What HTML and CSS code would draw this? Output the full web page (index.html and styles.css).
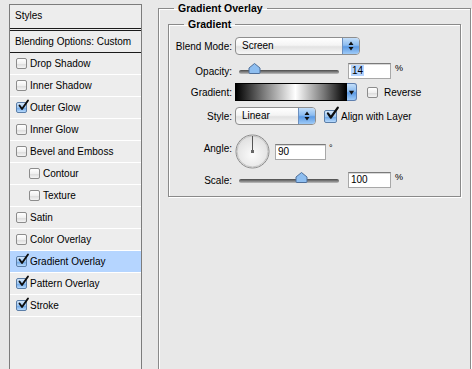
FILE: index.html
```html
<!DOCTYPE html>
<html lang="en">
<head>
    <meta charset="UTF-8">
    <title>Layer Style - Gradient Overlay</title>
    <link rel="stylesheet" href="styles.css">
</head>
<body>
    <div class="styles-panel">
        <div class="panel-head">Styles</div>
        <div class="panel-blend">Blending Options: Custom</div>
        <div class="fx"><span class="cb"></span>Drop Shadow</div>
        <div class="fx"><span class="cb"></span>Inner Shadow</div>
        <div class="fx"><span class="cb on"><svg viewBox="0 0 12 12"><path d="M2.5 5.5 L5 9 L11 0.5"/></svg></span>Outer Glow</div>
        <div class="fx"><span class="cb"></span>Inner Glow</div>
        <div class="fx"><span class="cb"></span>Bevel and Emboss</div>
        <div class="fx sub"><span class="cb"></span>Contour</div>
        <div class="fx sub"><span class="cb"></span>Texture</div>
        <div class="fx"><span class="cb"></span>Satin</div>
        <div class="fx"><span class="cb"></span>Color Overlay</div>
        <div class="fx selected"><span class="cb on"><svg viewBox="0 0 12 12"><path d="M2.5 5.5 L5 9 L11 0.5"/></svg></span>Gradient Overlay</div>
        <div class="fx"><span class="cb on"><svg viewBox="0 0 12 12"><path d="M2.5 5.5 L5 9 L11 0.5"/></svg></span>Pattern Overlay</div>
        <div class="fx"><span class="cb on"><svg viewBox="0 0 12 12"><path d="M2.5 5.5 L5 9 L11 0.5"/></svg></span>Stroke</div>
    </div>

    <div class="main">
        <fieldset class="group outer">
            <legend>Gradient Overlay</legend>
            <fieldset class="group inner">
                <legend>Gradient</legend>

                <div class="field r-blend">
                    <label>Blend Mode:</label>
                    <div class="popup blend-popup">
                        <span class="popup-text">Screen</span>
                        <span class="stepper"><svg viewBox="0 0 8 12"><path d="M4 1.5 L6.5 5 H1.5 Z M4 10.5 L6.5 7 H1.5 Z"/></svg></span>
                    </div>
                </div>

                <div class="field r-opacity">
                    <label>Opacity:</label>
                    <div class="slider">
                        <div class="track"></div>
                        <svg class="thumb" style="left: 9px" viewBox="0 0 13 11"><path d="M6.5 0.5 L12 5 V9.5 Q12 10.5 11 10.5 H2 Q1 10.5 1 9.5 V5 Z"/></svg>
                    </div>
                    <div class="num"><span class="sel">14</span></div>
                    <span class="unit">%</span>
                </div>

                <div class="field r-gradient">
                    <label>Gradient:</label>
                    <div class="grad-bar"></div>
                    <span class="grad-drop"><svg viewBox="0 0 8 8"><path d="M1 2 H7 L4 6.5 Z"/></svg></span>
                    <span class="cb reverse-cb"></span>
                    <span class="cb-label reverse-label">Reverse</span>
                </div>

                <div class="field r-style">
                    <label>Style:</label>
                    <div class="popup style-popup">
                        <span class="popup-text">Linear</span>
                        <span class="stepper"><svg viewBox="0 0 8 12"><path d="M4 1.5 L6.5 5 H1.5 Z M4 10.5 L6.5 7 H1.5 Z"/></svg></span>
                    </div>
                    <span class="cb on big-cb"><svg viewBox="0 0 12 12"><path d="M2.5 5.5 L5 9 L11 0.5"/></svg></span>
                    <span class="cb-label align-label">Align with Layer</span>
                </div>

                <div class="field r-angle">
                    <label>Angle:</label>
                    <svg class="dial" viewBox="0 0 35 35">
                        <defs>
                            <radialGradient id="dialFill" cx="50%" cy="60%" r="60%">
                                <stop offset="0" stop-color="#fbfbfb"/>
                                <stop offset="1" stop-color="#dedede"/>
                            </radialGradient>
                        </defs>
                        <circle cx="17.5" cy="17.5" r="16.5" fill="url(#dialFill)" stroke="#8c8c8c"/>
                        <circle cx="17.5" cy="17.5" r="15.5" fill="none" stroke="#c4c4c4"/>
                        <line x1="17.5" y1="17.5" x2="17.5" y2="2" stroke="#555" stroke-width="1"/>
                        <rect x="16" y="16" width="3" height="3" fill="#666"/>
                    </svg>
                    <div class="num angle-num">90</div>
                    <span class="unit deg">°</span>
                </div>

                <div class="field r-scale">
                    <label>Scale:</label>
                    <div class="slider">
                        <div class="track"></div>
                        <svg class="thumb" style="left: 56px" viewBox="0 0 13 11"><path d="M6.5 0.5 L12 5 V9.5 Q12 10.5 11 10.5 H2 Q1 10.5 1 9.5 V5 Z"/></svg>
                    </div>
                    <div class="num">100</div>
                    <span class="unit">%</span>
                </div>
            </fieldset>
        </fieldset>
    </div>
</body>
</html>
```

FILE: styles.css
```css
html, body {
    height: 100%;
}
body {
    margin: 0;
    display: flex;
    overflow: hidden;
    background: #e8e8e8;
    font-family: "Liberation Sans", Arial, sans-serif;
    font-size: 10px;
    color: #000;
}

/* left list of effects */
.styles-panel {
    flex: none;
    width: 131px;
    height: 420px;
    margin: 4px 0 0 9px;
    border: 1px solid #7c7c7c;
    background: #ededed;
}
.panel-head {
    height: 23px;
    line-height: 22px;
    padding-left: 5px;
    border-bottom: 3px double #1a1a1a;
}
.panel-blend {
    height: 21px;
    line-height: 21px;
    padding-left: 5px;
    border-bottom: 1px solid #1a1a1a;
}
.fx {
    display: flex;
    align-items: center;
    gap: 3px;
    height: 21px;
    padding-left: 6px;
    border-bottom: 1px solid #fff;
}
.fx.sub {
    padding-left: 19px;
}
.fx.selected {
    background: #b5d5ff;
}

/* aqua checkbox */
.cb {
    flex: none;
    position: relative;
    width: 11px;
    height: 11px;
    box-sizing: border-box;
    border: 1px solid #8c8c8c;
    border-radius: 2px;
    background: linear-gradient(#ffffff, #f0f0f0 50%, #dcdcdc 55%, #f4f4f4);
}
.cb.on {
    border-color: #5b7ea8;
    background: linear-gradient(#d6e8fb, #9cc6f2 50%, #6fa8e8 55%, #b8dafc);
}
.cb svg {
    position: absolute;
    left: 0;
    top: -3px;
    width: 12px;
    height: 12px;
    overflow: visible;
}
.cb svg path {
    fill: none;
    stroke: #0d0d0d;
    stroke-width: 1.9;
    stroke-linecap: round;
    stroke-linejoin: round;
}

/* right side */
.main {
    flex: 1;
    margin: 0 1px 0 16px;
    padding-top: 2px;
}
.group {
    margin: 0;
    border: 1px solid #8a8a8a;
    box-shadow: 1px 1px 0 #fff, inset 1px 1px 0 #fff;
}
.group legend {
    font-weight: bold;
    font-size: 10.5px;
    line-height: 12px;
    padding: 0 4px;
}
.outer {
    height: 420px;
    padding: 0 9px;
}
.outer > legend {
    margin-left: 6px;
}
.inner {
    margin-top: 4px;
    padding: 7px 0 8px 0;
}
.inner > legend {
    margin-left: 15px;
}

.field {
    display: flex;
    align-items: center;
}
.field label {
    flex: none;
    width: 63px;
    margin-right: 3px;
    text-align: right;
}
.r-blend { height: 18px; }
.r-opacity { height: 16px; margin-top: 8px; }
.r-gradient { height: 18px; margin-top: 4px; }
.r-style { height: 18px; margin-top: 6px; }
.r-angle { height: 35px; margin-top: 9px; }
.r-scale { height: 16px; margin-top: 3px; }
.r-angle label { margin-top: -6px; }

/* popup menus */
.popup {
    display: flex;
    height: 18px;
    box-sizing: border-box;
    border: 1px solid #8e8e8e;
    border-radius: 4px;
    background: linear-gradient(#ffffff, #f4f4f4 45%, #e2e2e2 55%, #f7f7f7);
    overflow: hidden;
}
.blend-popup { width: 125px; }
.style-popup { width: 81px; }
.popup-text {
    flex: 1;
    line-height: 16px;
    padding-left: 6px;
}
.stepper {
    flex: none;
    width: 16px;
    border-left: 1px solid #6b8fbf;
    background: linear-gradient(#c3def9, #8cbcf0 45%, #5c9ae4 55%, #9fcbf7);
    display: flex;
    align-items: center;
    justify-content: center;
}
.stepper svg {
    width: 8px;
    height: 12px;
    fill: #111;
}

/* sliders */
.slider {
    position: relative;
    flex: none;
    width: 100px;
    height: 12px;
    margin-left: 4px;
}
.track {
    margin-top: 5px;
    height: 4px;
    border-radius: 2px;
    background: linear-gradient(#4a4a4a, #8a8a8a 60%, #c0c0c0);
}
.thumb {
    position: absolute;
    top: -2px;
    width: 13px;
    height: 11px;
}
.thumb path {
    fill: #8ebef0;
    stroke: #4f6f99;
    stroke-width: 1;
}

/* number fields */
.num {
    flex: none;
    width: 43px;
    height: 16px;
    box-sizing: border-box;
    margin-left: 9px;
    padding-left: 2px;
    line-height: 13px;
    background: #fff;
    border: 1px solid #a8a8a8;
    border-top-color: #7a7a7a;
    box-shadow: inset 0 1px 0 #d8d8d8;
}
.num .sel {
    background: #b5d5ff;
    padding: 0 1px;
}
.angle-num {
    width: 51px;
    margin-left: 5px;
}
.unit {
    align-self: flex-start;
    margin-left: 4px;
    font-size: 9px;
    line-height: 10px;
}
.unit.deg {
    margin-top: 9px;
    margin-left: 3px;
}

/* gradient preview */
.grad-bar {
    flex: none;
    width: 112px;
    height: 18px;
    box-sizing: border-box;
    border: 1px solid #000;
    background: linear-gradient(90deg, #000, #7a7a7a 25%, #fff 54%, #777 80%, #000);
}
.grad-drop {
    flex: none;
    width: 10px;
    height: 18px;
    box-sizing: border-box;
    border: 1px solid #5f7fae;
    border-left: none;
    border-radius: 0 3px 3px 0;
    background: linear-gradient(#c3def9, #8cbcf0 45%, #5c9ae4 55%, #9fcbf7);
    display: flex;
    align-items: center;
    justify-content: center;
}
.grad-drop svg {
    width: 7px;
    height: 7px;
    fill: #111;
}
.reverse-cb {
    margin-left: 10px;
}
.cb-label {
    margin-left: 6px;
}
.big-cb {
    width: 13px;
    height: 13px;
    margin-left: 8px;
}
.big-cb svg {
    width: 14px;
    height: 14px;
    top: -4px;
}
.align-label {
    margin-left: 4px;
}
.dial {
    flex: none;
    width: 35px;
    height: 35px;
}
```
